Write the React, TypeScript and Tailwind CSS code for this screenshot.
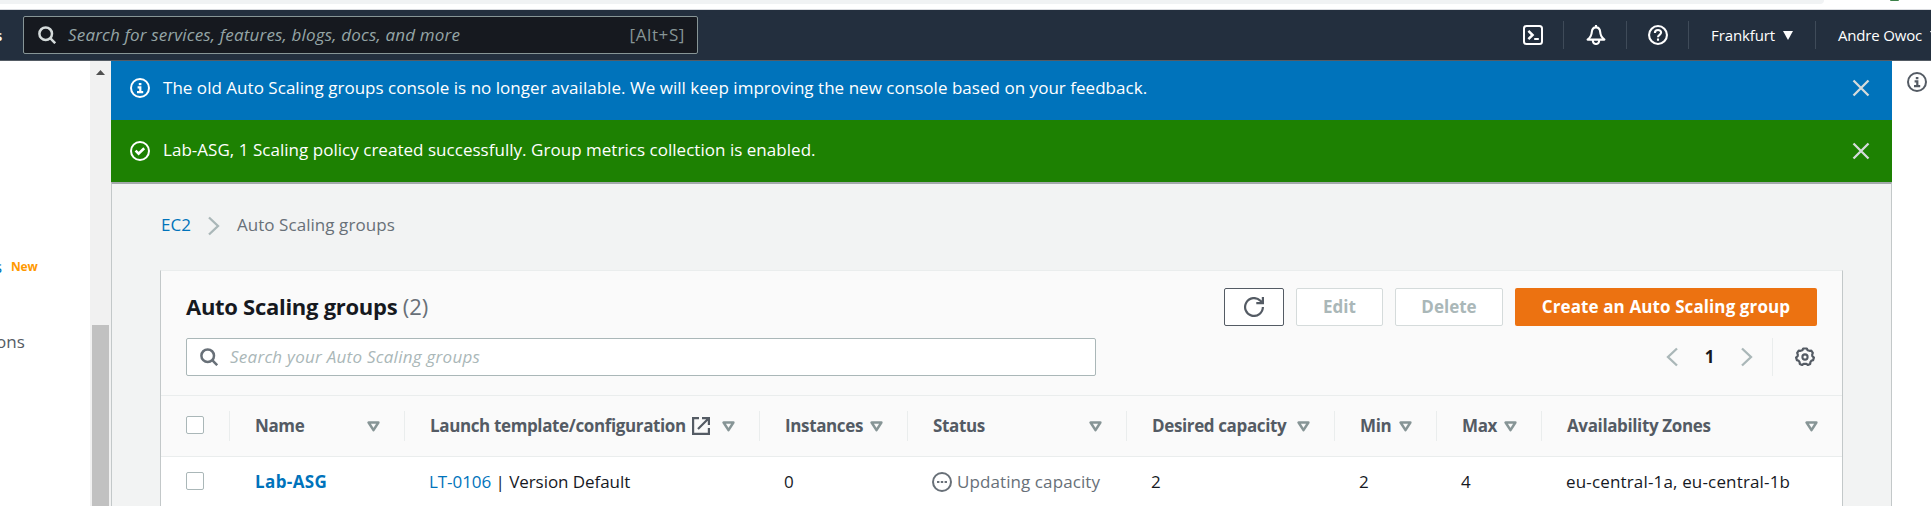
import type { ReactNode } from "react";

const OPEN = "font-['Open_Sans','Noto_Sans',sans-serif]";

function SearchIcon({ className }: { className: string }) {
  return (
    <svg viewBox="0 0 18 18" className={className} fill="none" stroke="currentColor" strokeWidth="2.5">
      <circle cx="7.7" cy="7.7" r="6.3" />
      <path d="M12.2 12.2 17.200 17.200" />
    </svg>
  );
}

function InfoIcon({ className }: { className: string }) {
  return (
    <svg viewBox="0 0 20 20" className={className} fill="none" stroke="currentColor" strokeWidth="2">
      <circle cx="10" cy="10" r="9" />
      <path d="M8.800 6.100h2.600M7.600 9.300h2.700v4.700M7 14.200h6.200" strokeWidth="2.200" />
    </svg>
  );
}

function CheckIcon() {
  return (
    <svg viewBox="0 0 20 20" className="size-5" fill="none" stroke="currentColor" strokeWidth="2">
      <circle cx="10" cy="10" r="9" />
      <path d="m5.6 9.6 3 3 5.6-5.4" strokeWidth="2.6" />
    </svg>
  );
}

function CloseIcon() {
  return (
    <svg viewBox="0 0 18 18" className="size-[18px] text-[#d5dbdb]" fill="none" stroke="currentColor" strokeWidth="2.3">
      <path d="m1.5 1.5 15 15m0-15-15 15" />
    </svg>
  );
}

function Chevron({ left = false }: { left?: boolean }) {
  return (
    <svg viewBox="0 0 12 20" className="h-5 w-3 shrink-0 text-[#aab7b8]" fill="none" stroke="currentColor" strokeWidth="2.3">
      <path d={left ? "M11 1.5 2 10l9 8.5" : "m1 1.5 9 8.5-9 8.5"} />
    </svg>
  );
}

function SortIcon() {
  return (
    <svg viewBox="0 0 13 11" className="h-[11px] w-[13px] shrink-0 text-[#879596]" fill="none" stroke="currentColor" strokeWidth="2.5" strokeLinejoin="round">
      <path d="M1.6 1.5h9.8L6.5 9.2z" />
    </svg>
  );
}

function Column({ label, extra, last = false }: { label: string; extra?: ReactNode; last?: boolean }) {
  return (
    <div className={last ? "flex h-[30px] items-center pr-6 pl-[25px]" : "flex h-[30px] items-center border-r border-[#eaeded] pr-6 pl-[25px]"}>
      <span className="pb-px text-[17px] leading-[29px] font-bold tracking-[-0.37px] whitespace-nowrap text-[#545b64]">{label}</span>
      {extra}
      <span className="ml-auto">
        <SortIcon />
      </span>
    </div>
  );
}

const GRID = "grid grid-cols-[69px_175px_355px_148px_219px_208px_102px_105px_1fr] items-center";

function Checkbox() {
  return <span className="ml-[25px] block size-[18px] shrink-0 rounded-[2px] border border-[#aab7b8] bg-white" />;
}

function Divider() {
  return <span className="h-7 w-px bg-[#3f4b59]" />;
}

export default function App() {
  return (
    <div className={`${OPEN} flex h-[506px] w-[1931px] flex-col overflow-hidden bg-white text-[#16191f]`}>
      <div className="flex h-[10px] shrink-0 items-start justify-between border-b border-[#dadce0]">
        <div className="h-1 w-[1824px] rounded-br-[14px] bg-[#f1f3f4]" />
        <div className="mr-[32px] h-px w-[9px] rounded-b-full bg-[#3c8148]" />
      </div>

      <header className="flex h-[51px] shrink-0 items-center border-b border-[#545b64] bg-[#232f3e] text-white">
        <div className="flex w-[23px] shrink-0 justify-start overflow-hidden">
          <span className="-ml-[5px] text-[15px] font-semibold">s</span>
        </div>
        <div className="flex h-[38px] w-[675px] items-center rounded-[2px] border border-[#879596] bg-[#16191f] pr-3 pl-[14px] text-[17px]">
          <SearchIcon className="size-[18px] text-[#d5dbdb]" />
          <span className="ml-3 tracking-[0.18px] text-[#95a5a6] italic">Search for services, features, blogs, docs, and more</span>
          <span className="ml-auto tracking-[0.6px] text-[#879596]">[Alt+S]</span>
        </div>
        <div className="ml-auto flex w-[409px] shrink-0 items-center overflow-hidden [&>*]:shrink-0">
          <svg viewBox="0 0 20 20" className="ml-px size-5" fill="none" stroke="currentColor" strokeWidth="2">
            <rect x="1" y="1" width="18" height="18" rx="2.5" />
            <path d="m5.400 5.800 4.200 4.200-4.200 4.200" strokeWidth="2.500" />
            <path d="M11.200 14h4.600" />
          </svg>
          <span className="w-5" />
          <Divider />
          <svg viewBox="0 0 20 20" className="ml-[22px] size-5" fill="none" stroke="currentColor" strokeWidth="2.100" strokeLinejoin="round">
            <path d="M10 0v2.400M10 2.400c-2.800 0-4 2-4.200 4.600-.2 3.600-1.600 5.600-4.200 7.600h16.800c-2.600-2-4-4-4.200-7.600C14 4.400 12.800 2.400 10 2.400z" />
            <path d="M6.800 15c0 5.300 6.400 5.300 6.400 0" />
          </svg>
          <span className="w-5" />
          <Divider />
          <svg viewBox="0 0 20 20" className="ml-[21px] size-5" fill="none" stroke="currentColor" strokeWidth="2.100">
            <circle cx="10" cy="10" r="8.950" />
            <path d="M6.900 8c0-4 6.200-3.800 6.200-.4 0 2.200-3.100 2.200-3.100 4.600M10 13.600v2.200" />
          </svg>
          <span className="w-5" />
          <Divider />
          <span className="ml-[22px] w-16 text-[15px] font-medium tracking-[-0.1px] whitespace-nowrap">Frankfurt</span>
          <svg viewBox="0 0 10 9" className="ml-2 h-[9px] w-[10px]" fill="currentColor">
            <path d="M0 0h10L5 9z" />
          </svg>
          <span className="w-[22px]" />
          <Divider />
          <span className="ml-[22px] w-[84px] text-[15px] font-medium tracking-[-0.18px] whitespace-nowrap">Andre Owoc</span>
          <svg viewBox="0 0 10 9" className="ml-2 h-[9px] w-[10px]" fill="currentColor">
            <path d="M0 0h10L5 9z" />
          </svg>
        </div>
      </header>

      <div className="flex min-h-0 flex-1">
        <aside className="flex w-[90px] shrink-0 flex-col overflow-hidden">
          <div className="mt-[194px] flex h-6 items-center">
            <span className="-ml-[6px] w-2 text-[17px] text-[#0073bb]">s</span>
            <span className="ml-[9px] text-[12px] font-bold tracking-[-0.2px] text-[#ff9900]">New</span>
          </div>
          <span className="mt-[51px] -ml-[4px] text-[17px] leading-6 text-[#545b64]">ons</span>
        </aside>
        <div className="flex w-[21px] shrink-0 flex-col items-center bg-[#f1f1f1]">
          <svg viewBox="0 0 9 5" className="mt-[9px] h-[5px] w-[9px]" fill="#505050">
            <path d="M0 5 4.500 0 9 5z" />
          </svg>
          <div className="mt-[250px] w-[17px] flex-1 bg-[#c1c1c1]" />
        </div>

        <main className="flex w-[1781px] shrink-0 flex-col bg-[#f2f3f3]">
          <div className="flex h-[59px] shrink-0 items-center bg-[#0073bb] pr-[22px] pb-[5px] pl-[19px] text-white">
            <InfoIcon className="size-5" />
            <span className="ml-[13px] text-[17px] font-medium tracking-[0.03px]">
              The old Auto Scaling groups console is no longer available. We will keep improving the new console based on your feedback.
            </span>
            <span className="ml-auto">
              <CloseIcon />
            </span>
          </div>
          <div className="flex h-[62px] shrink-0 items-center bg-[#1d8102] pr-[22px] pl-[19px] text-white">
            <CheckIcon />
            <span className="ml-[13px] pb-[2px] text-[17px] font-medium tracking-[0.03px]">
              Lab-ASG, 1 Scaling policy created successfully. Group metrics collection is enabled.
            </span>
            <span className="ml-auto">
              <CloseIcon />
            </span>
          </div>
          <div className="flex min-h-0 flex-1 flex-col border-x border-t-2 border-x-[#c3c8c9] border-t-[#a3a9ab] px-12">
            <nav className="mt-[27px] flex h-7 shrink-0 items-center pl-px text-[17px]">
              <span className="mr-[17px] text-[#0073bb]">EC2</span>
              <span className="pt-[2px]">
                <Chevron />
              </span>
              <span className="ml-[17px] tracking-[0.06px] text-[#687078]">Auto Scaling groups</span>
            </nav>
            <section className="mt-[31px] flex min-h-0 flex-1 flex-col border border-b-0 border-x-[#c3c8c9] border-t-[#eaeded] bg-[#fafafa]">
              <div className="flex h-[55px] shrink-0 items-end pr-[25px] pl-[25px]">
                <h1 className="mb-[2px] text-[22px] leading-9 font-bold tracking-[-0.28px]">
                  Auto Scaling groups <span className="font-normal tracking-normal text-[#687078]">(2)</span>
                </h1>
                <div className="ml-auto flex h-[38px] gap-3 text-[17px] font-bold text-[#aab7b8]">
                  <button className="flex w-[60px] items-center justify-center rounded-[2px] border border-[#545b64] bg-white text-[#545b64]">
                    <svg viewBox="0 0 20 20" className="size-5" fill="none" stroke="currentColor" strokeWidth="2.200">
                      <path d="M18.900 10A8.900 8.900 0 1 1 16.400 3.800L18.500 6M18.900 0v6.200h-6.600" />
                    </svg>
                  </button>
                  <button className="w-[87px] rounded-[2px] border border-[#d5dbdb] bg-white">Edit</button>
                  <button className="w-[108px] rounded-[2px] border border-[#d5dbdb] bg-white">Delete</button>
                  <button className="w-[302px] rounded-[2px] bg-[#ec7211] tracking-[0.1px] text-white">Create an Auto Scaling group</button>
                </div>
              </div>
              <div className="mt-3 flex h-[38px] shrink-0 items-center pr-[27px] pl-[25px]">
                <div className="flex h-[38px] w-[910px] items-center rounded-[2px] border border-[#aab7b8] bg-white pl-[13px]">
                  <SearchIcon className="size-[18px] text-[#687078]" />
                  <span className="ml-3 text-[17px] tracking-[0.26px] text-[#aab7b8] italic">Search your Auto Scaling groups</span>
                </div>
                <div className="ml-auto flex items-center">
                  <Chevron left />
                  <span className="w-[63px] text-center text-[17px] font-bold">1</span>
                  <Chevron />
                  <span className="mr-[22px] ml-[19px] h-[38px] w-px bg-[#eaeded]" />
                  <svg viewBox="0 0 20 20" className="size-5 text-[#545b64]" fill="none" stroke="currentColor" strokeLinejoin="round">
                    <path
                      strokeWidth="2.200"
                      d="M8.200 1.500h3.600l.8 1.700 1.800.6 1.900-.1 1.500 2.100-.6 1.800.1 1.400 1.600 1.600-.8 2.500-1.800.7-.9 1.300-.2 1.800-2.300 1.100-1.500-1.100h-2.800l-1.500 1.100-2.300-1.100-.2-1.800-.9-1.300-1.800-.7-.8-2.500 1.600-1.600.1-1.400-.6-1.800 1.500-2.100 1.900.1 1.800-.6z"
                    />
                    <circle cx="10" cy="10" r="2.600" strokeWidth="2.100" />
                  </svg>
                </div>
              </div>
              <div className={`${GRID} mt-[19px] h-[62px] shrink-0 border-y border-[#eaeded]`}>
                <div className="flex h-[30px] items-center border-r border-[#eaeded] pb-[3px]">
                  <Checkbox />
                </div>
                <Column label="Name" />
                <Column
                  label="Launch template/configuration"
                  extra={
                    <svg viewBox="0 0 18 18" className="ml-[6px] size-[18px] shrink-0 text-[#545b64]" fill="none" stroke="currentColor" strokeWidth="2.200">
                      <path d="M7 1.100H1.100v15.800h15.800V11M10 1.100h6.900V8M16.500 1.500 6 12" />
                    </svg>
                  }
                />
                <Column label="Instances" />
                <Column label="Status" />
                <Column label="Desired capacity" />
                <Column label="Min" />
                <Column label="Max" />
                <Column label="Availability Zones" last />
              </div>
              <div className={`${GRID} min-h-0 flex-1 content-start bg-white pt-[12px] text-[17px] leading-[26px] [&>*]:whitespace-nowrap`}>
                <span className="-mt-[2px]">
                  <Checkbox />
                </span>
                <span className="pl-[25px] font-bold tracking-[0.4px] text-[#0073bb]">Lab-ASG</span>
                <span className="pl-6 tracking-[-0.06px]">
                  <span className="text-[#0073bb]">LT-0106</span> | Version Default
                </span>
                <span className="pl-6">0</span>
                <span className="flex items-center pl-6 tracking-[0.09px] text-[#687078]">
                  <svg viewBox="0 0 20 20" className="mr-[5px] size-5" fill="none" stroke="currentColor" strokeWidth="2">
                    <circle cx="10" cy="10" r="9" />
                    <path d="M5 10h2.400M8.800 10h2.400M12.600 10H15" />
                  </svg>
                  Updating capacity
                </span>
                <span className="pl-6">2</span>
                <span className="pl-6">2</span>
                <span className="pl-6">4</span>
                <span className="pl-6 tracking-[0.16px]">eu-central-1a, eu-central-1b</span>
              </div>
            </section>
          </div>
        </main>

        <aside className="flex min-w-0 flex-1 justify-start pt-[11px] pl-[15px] text-[#545b64]">
          <InfoIcon className="size-5 shrink-0" />
        </aside>
      </div>
    </div>
  );
}
